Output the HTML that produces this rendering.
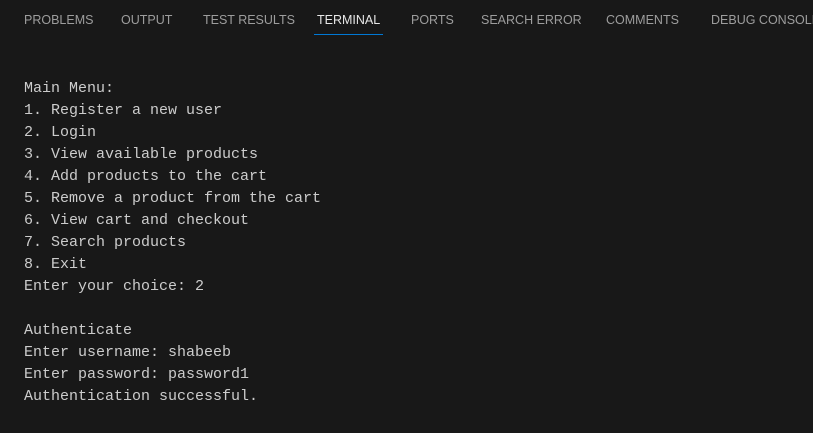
<!DOCTYPE html>
<html><head><meta charset="utf-8"><style>
html,body{margin:0;padding:0;background:#181818;width:813px;height:433px;overflow:hidden}
.tab{position:absolute;top:13px;font:12.5px "Liberation Sans",sans-serif;color:#9d9d9d;white-space:nowrap;line-height:15px}
.act{color:#e7e7e7}
.ul{position:absolute;left:314px;top:34px;width:69px;height:1px;background:#0078d4}
pre{position:absolute;left:24px;top:78px;margin:0;font:15px/22px "Liberation Mono",monospace;color:#cccccc}
</style></head><body>
<div class="tab" style="left:24px">PROBLEMS</div>
<div class="tab" style="left:121px">OUTPUT</div>
<div class="tab" style="left:203px">TEST RESULTS</div>
<div class="tab act" style="left:317px">TERMINAL</div>
<div class="tab" style="left:411px">PORTS</div>
<div class="tab" style="left:481px">SEARCH ERROR</div>
<div class="tab" style="left:606px">COMMENTS</div>
<div class="tab" style="left:711px">DEBUG CONSOLE</div>
<div class="ul"></div>
<pre>Main Menu:
1. Register a new user
2. Login
3. View available products
4. Add products to the cart
5. Remove a product from the cart
6. View cart and checkout
7. Search products
8. Exit
Enter your choice: 2

Authenticate
Enter username: shabeeb
Enter password: password1
Authentication successful.</pre>
</body></html>
